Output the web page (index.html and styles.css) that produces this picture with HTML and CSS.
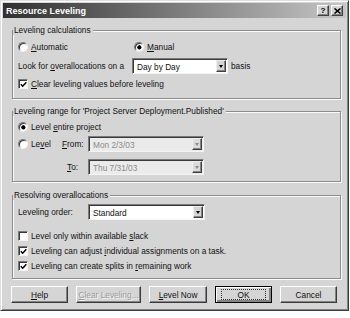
FILE: index.html
```html
<!DOCTYPE html>
<html lang="en">
<head>
    <meta charset="UTF-8">
    <title>Resource Leveling</title>
    <link rel="stylesheet" href="styles.css">
</head>
<body>
    <div class="dialog">
        <div class="titlebar">
            <span class="title">Resource Leveling</span>
            <span class="title-btns">
                <span class="title-btn">?</span>
                <span class="title-btn">
                    <svg width="7" height="6" viewBox="0 0 7 6"><path d="M0.5 0.5 L6.5 5.5 M6.5 0.5 L0.5 5.5" stroke="#000" stroke-width="1.6"/></svg>
                </span>
            </span>
        </div>

        <div class="dialog-body">
            <!-- Leveling calculations -->
            <div class="group group-calc">
                <div class="legend">Leveling calculations</div>
                <div class="row row-radios">
                    <span class="opt opt-auto"><span class="radio"></span><span><u>A</u>utomatic</span></span>
                    <span class="opt"><span class="radio checked"></span><span><u>M</u>anual</span></span>
                </div>
                <div class="row row-look">
                    <span class="lbl lbl-look">Look for <u>o</u>verallocations on a</span>
                    <span class="combo combo-basis"><span class="combo-text">Day by Day</span><span class="combo-btn"></span></span>
                    <span class="after">basis</span>
                </div>
                <div class="row row-clear">
                    <span class="opt"><span class="check"><svg width="7" height="7" viewBox="0 0 7 7"><path d="M0.8 3.2 L2.7 5.2 L6.3 1.2" fill="none" stroke="#000" stroke-width="1.5"/></svg></span><span><u>C</u>lear leveling values before leveling</span></span>
                </div>
            </div>

            <!-- Leveling range -->
            <div class="group group-range">
                <div class="legend">Leveling range for 'Project Server Deployment.Published'</div>
                <div class="row row-entire">
                    <span class="opt"><span class="radio checked"></span><span>Level <u>e</u>ntire project</span></span>
                </div>
                <div class="row row-from">
                    <span class="opt opt-level"><span class="radio"></span><span>Le<u>v</u>el</span></span>
                    <span class="lbl lbl-from"><u>F</u>rom:</span>
                    <span class="combo combo-date disabled"><span class="combo-text">Mon 2/3/03</span><span class="combo-btn"></span></span>
                </div>
                <div class="row row-to">
                    <span class="lbl lbl-to"><u>T</u>o:</span>
                    <span class="combo combo-date disabled"><span class="combo-text">Thu 7/31/03</span><span class="combo-btn"></span></span>
                </div>
            </div>

            <!-- Resolving overallocations -->
            <div class="group group-resolve">
                <div class="legend">Resolving overallocations</div>
                <div class="row row-order">
                    <span class="lbl lbl-order">Leveling order:</span>
                    <span class="combo combo-order"><span class="combo-text">Standard</span><span class="combo-btn"></span></span>
                </div>
                <div class="row row-slack">
                    <span class="opt"><span class="check"></span><span>Level only within available <u>s</u>lack</span></span>
                </div>
                <div class="row row-check">
                    <span class="opt"><span class="check"><svg width="7" height="7" viewBox="0 0 7 7"><path d="M0.8 3.2 L2.7 5.2 L6.3 1.2" fill="none" stroke="#000" stroke-width="1.5"/></svg></span><span>Leveling can adjust <u>i</u>ndividual assignments on a task.</span></span>
                </div>
                <div class="row row-check">
                    <span class="opt"><span class="check"><svg width="7" height="7" viewBox="0 0 7 7"><path d="M0.8 3.2 L2.7 5.2 L6.3 1.2" fill="none" stroke="#000" stroke-width="1.5"/></svg></span><span>Leveling can create splits in <u>r</u>emaining work</span></span>
                </div>
            </div>

            <div class="buttons">
                <span class="button"><span><u>H</u>elp</span></span>
                <span class="button button-wide disabled"><span><u>C</u>lear Leveling...</span></span>
                <span class="button button-level"><span><u>L</u>evel Now</span></span>
                <span class="button default"><span class="focus">OK</span></span>
                <span class="button"><span>Cancel</span></span>
            </div>
        </div>
    </div>
</body>
</html>
```

FILE: styles.css
```css
body {
    margin: 0;
    background: #fff;
    font-family: "Liberation Sans", Arial, sans-serif;
    font-size: 8.3px;
    line-height: 10px;
    color: #111;
}

u {
    text-underline-offset: 1px;
}

.dialog {
    width: 343px;
    padding: 2px;
    border: 1px solid;
    border-color: #dedede #3a3a3a #3a3a3a #dedede;
    box-shadow: inset 1px 1px 0 #fff, inset -1px -1px 0 #848484;
    background: #d5d5d5;
}

/* title bar */
.titlebar {
    height: 15px;
    display: flex;
    align-items: center;
    justify-content: space-between;
    padding: 0 3px;
    background: linear-gradient(to right, #303030, #c6c6c6);
}

.title {
    color: #fff;
    font-weight: bold;
    font-size: 9px;
}

.title-btns {
    display: flex;
    gap: 2px;
}

.title-btn {
    box-sizing: border-box;
    width: 12px;
    height: 11px;
    display: flex;
    align-items: center;
    justify-content: center;
    background: #d5d5d5;
    border: 1px solid;
    border-color: #fff #404040 #404040 #fff;
    box-shadow: inset -1px -1px 0 #848484;
    font-weight: bold;
    font-size: 8px;
    color: #000;
}

.dialog-body {
    padding: 0 5px 5px 9px;
}

/* group boxes */
.group {
    border: 1px solid #8c8c8c;
    box-shadow: inset 1px 1px 0 #fafafa, 1px 1px 0 #fafafa;
    padding: 0 0 0 5px;
    display: flex;
    flex-direction: column;
}

.legend {
    align-self: flex-start;
    margin: -6px 0 0 -5px;
    padding: 0 2px 0 1px;
    background: #d5d5d5;
    height: 10px;
}

.group-calc {
    margin-top: 12px;
    padding-bottom: 7px;
}

.group-range {
    margin-top: 12px;
    padding-bottom: 6px;
}

.group-resolve {
    margin-top: 13px;
    padding-bottom: 5px;
}

.row {
    display: flex;
    align-items: center;
}

.opt {
    display: flex;
    align-items: center;
    height: 14px;
    white-space: pre;
}

.opt-auto {
    width: 116px;
}

.opt-level {
    width: 44px;
}

.lbl {
    white-space: nowrap;
}

.lbl-look {
    width: 114px;
}

.lbl-from {
    width: 26px;
}

.lbl-to {
    width: 21px;
    margin-left: 49px;
}

.lbl-order {
    width: 70px;
}

.after {
    margin-left: 3px;
}

.row-radios { margin-top: 5px; }
.row-look { margin-top: 4px; }
.row-clear { margin-top: 3px; }
.row-entire { margin-top: 4px; }
.row-from { margin-top: 2px; }
.row-to { margin-top: 7px; }
.row-order { margin-top: 4px; }
.row-slack { margin-top: 9px; }
.row-check { margin-top: 1px; }

/* radio buttons and checkboxes */
.radio {
    box-sizing: border-box;
    width: 10px;
    height: 10px;
    margin-right: 3px;
    border-radius: 50%;
    border: 1px solid;
    border-color: #7a7a7a #f4f4f4 #f4f4f4 #7a7a7a;
    background: #fff;
    box-shadow: inset 1px 1px 0 #3a3a3a;
}

.radio.checked {
    background: radial-gradient(circle at 55% 55%, #000 0 1.8px, #fff 2.4px);
}

.check {
    box-sizing: border-box;
    width: 10px;
    height: 10px;
    margin-right: 3px;
    border: 1px solid;
    border-color: #7a7a7a #f4f4f4 #f4f4f4 #7a7a7a;
    background: #fff;
    box-shadow: inset 1px 1px 0 #3a3a3a;
    display: flex;
    align-items: center;
    justify-content: center;
}

/* combo boxes */
.combo {
    box-sizing: border-box;
    height: 16px;
    display: flex;
    align-items: stretch;
    border: 1px solid;
    border-color: #7a7a7a #f4f4f4 #f4f4f4 #7a7a7a;
    box-shadow: inset 1px 1px 0 #3a3a3a;
    background: #fff;
    padding: 1px 1px 0 1px;
}

.combo-basis { width: 96px; }
.combo-date { width: 116px; }
.combo-order { width: 117px; }

.combo-text {
    flex: 1;
    padding-left: 3px;
    display: flex;
    align-items: center;
}

.combo-btn {
    box-sizing: border-box;
    width: 10px;
    margin-bottom: 1px;
    background: #d5d5d5;
    border: 1px solid;
    border-color: #eee #404040 #404040 #eee;
    box-shadow: inset -1px -1px 0 #848484;
    display: flex;
    align-items: center;
    justify-content: center;
}

.combo-btn::after {
    content: "";
    border-left: 2.5px solid transparent;
    border-right: 2.5px solid transparent;
    border-top: 3px solid #000;
}

.combo.disabled {
    background: #ebebeb;
    color: #8a8a8a;
}

.combo.disabled .combo-btn {
    background: #dcdcdc;
}

.combo.disabled .combo-btn::after {
    border-top-color: #8a8a8a;
}

/* bottom buttons */
.buttons {
    display: flex;
    gap: 8px;
    margin: 7px 0 0 -1px;
}

.button {
    box-sizing: border-box;
    width: 57px;
    height: 17px;
    display: flex;
    align-items: center;
    justify-content: center;
    background: #d5d5d5;
    border: 1px solid;
    border-color: #fff #3a3a3a #3a3a3a #fff;
    box-shadow: inset -1px -1px 0 #848484;
    color: #111;
}

.button-wide {
    width: 65px;
}

.button-level {
    width: 58px;
}

.button.disabled {
    color: #9a9a9a;
    text-shadow: 1px 1px 0 #f6f6f6;
}

.button.default {
    border: 1px solid #000;
    box-shadow: inset 1px 1px 0 #fff, inset -2px -2px 0 #848484;
}

.focus {
    box-sizing: border-box;
    width: 45px;
    height: 11px;
    display: flex;
    align-items: center;
    justify-content: center;
    border: 1px dotted #333;
}
```
